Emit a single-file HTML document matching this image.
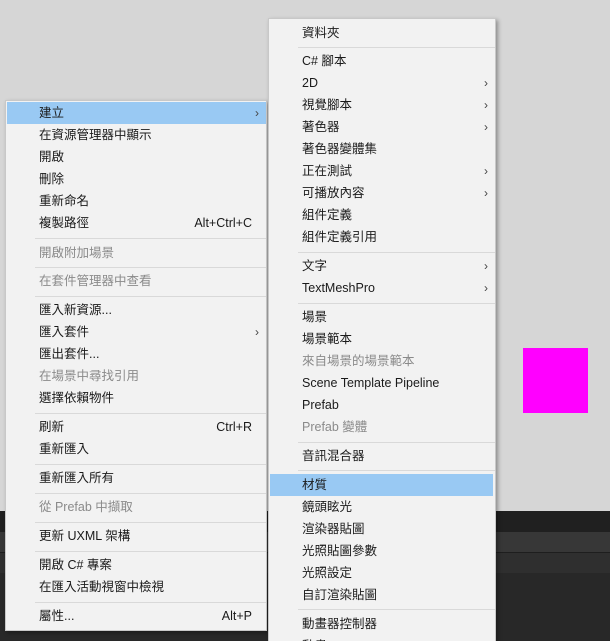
<!DOCTYPE html>
<html><head><meta charset="utf-8"><style>
*{margin:0;padding:0;box-sizing:border-box}
html{width:610px;height:641px;overflow:hidden}
body{width:610px;height:641px;overflow:hidden;position:relative;background:#d6d6d6;font-family:"Liberation Sans","Noto Sans CJK TC",sans-serif;font-size:12.5px;color:#1a1a1a}
.dark{position:absolute;left:0;width:610px}
.menu{position:absolute;background:#f2f2f2;border:1px solid #c8c8c8;box-shadow:2px 2px 4px rgba(0,0,0,.35);overflow:hidden}
.it{position:absolute;left:0;right:0;height:22px;line-height:22px;white-space:nowrap}
.hl{background:#99c9f3}
.dis{color:#8a8a8a}
.sc{position:absolute;right:14px;top:0}
.ar{position:absolute;right:7px;top:0;font-size:12px;color:#444}
.sep{position:absolute;right:0;height:1px;background:#d9d9d9}
.mag{position:absolute;left:523px;top:348px;width:65px;height:65px;background:#ff00ff}
</style></head><body>
<div class="dark" style="top:511px;height:21px;background:#202020"></div>
<div class="dark" style="top:532px;height:20px;background:#373737"></div>
<div class="dark" style="top:552px;height:1px;background:#1e1e1e"></div>
<div class="dark" style="top:553px;height:20px;background:#2f2f2f"></div>
<div class="dark" style="top:573px;height:68px;background:#282828"></div>
<div class="mag"></div>

<div class="menu" style="left:5px;top:100px;width:262px;height:531px">
<div class="it hl" style="top:1px;left:1px;right:0"><span style="padding-left:32px">建立</span><span class="ar">›</span></div>
<div class="it" style="top:23px;padding-left:33px">在資源管理器中顯示</div>
<div class="it" style="top:45px;padding-left:33px">開啟</div>
<div class="it" style="top:67px;padding-left:33px">刪除</div>
<div class="it" style="top:89px;padding-left:33px">重新命名</div>
<div class="it" style="top:111px;padding-left:33px">複製路徑<span class="sc">Alt+Ctrl+C</span></div>
<div class="sep" style="top:137px;left:29px"></div>
<div class="it dis" style="top:141px;padding-left:33px">開啟附加場景</div>
<div class="sep" style="top:166px;left:29px"></div>
<div class="it dis" style="top:169px;padding-left:33px">在套件管理器中查看</div>
<div class="sep" style="top:195px;left:29px"></div>
<div class="it" style="top:198px;padding-left:33px">匯入新資源...</div>
<div class="it" style="top:220px;padding-left:33px">匯入套件<span class="ar">›</span></div>
<div class="it" style="top:242px;padding-left:33px">匯出套件...</div>
<div class="it dis" style="top:264px;padding-left:33px">在場景中尋找引用</div>
<div class="it" style="top:286px;padding-left:33px">選擇依賴物件</div>
<div class="sep" style="top:312px;left:29px"></div>
<div class="it" style="top:315px;padding-left:33px">刷新<span class="sc">Ctrl+R</span></div>
<div class="it" style="top:337px;padding-left:33px">重新匯入</div>
<div class="sep" style="top:363px;left:29px"></div>
<div class="it" style="top:366px;padding-left:33px">重新匯入所有</div>
<div class="sep" style="top:392px;left:29px"></div>
<div class="it dis" style="top:395px;padding-left:33px">從 Prefab 中擷取</div>
<div class="sep" style="top:421px;left:29px"></div>
<div class="it" style="top:424px;padding-left:33px">更新 UXML 架構</div>
<div class="sep" style="top:450px;left:29px"></div>
<div class="it" style="top:453px;padding-left:33px">開啟 C# 專案</div>
<div class="it" style="top:475px;padding-left:33px">在匯入活動視窗中檢視</div>
<div class="sep" style="top:501px;left:29px"></div>
<div class="it" style="top:504px;padding-left:33px">屬性...<span class="sc">Alt+P</span></div>
</div>

<div class="menu" style="left:268px;top:18px;width:228px;height:623px;border-bottom:none">
<div class="it" style="top:3px;padding-left:33px">資料夾</div>
<div class="sep" style="top:28px;left:29px"></div>
<div class="it" style="top:31px;padding-left:33px">C# 腳本</div>
<div class="it" style="top:53px;padding-left:33px">2D<span class="ar">›</span></div>
<div class="it" style="top:75px;padding-left:33px">視覺腳本<span class="ar">›</span></div>
<div class="it" style="top:97px;padding-left:33px">著色器<span class="ar">›</span></div>
<div class="it" style="top:119px;padding-left:33px">著色器變體集</div>
<div class="it" style="top:141px;padding-left:33px">正在測試<span class="ar">›</span></div>
<div class="it" style="top:163px;padding-left:33px">可播放內容<span class="ar">›</span></div>
<div class="it" style="top:185px;padding-left:33px">組件定義</div>
<div class="it" style="top:207px;padding-left:33px">組件定義引用</div>
<div class="sep" style="top:233px;left:29px"></div>
<div class="it" style="top:236px;padding-left:33px">文字<span class="ar">›</span></div>
<div class="it" style="top:258px;padding-left:33px">TextMeshPro<span class="ar">›</span></div>
<div class="sep" style="top:284px;left:29px"></div>
<div class="it" style="top:287px;padding-left:33px">場景</div>
<div class="it" style="top:309px;padding-left:33px">場景範本</div>
<div class="it dis" style="top:331px;padding-left:33px">來自場景的場景範本</div>
<div class="it" style="top:353px;padding-left:33px">Scene Template Pipeline</div>
<div class="it" style="top:375px;padding-left:33px">Prefab</div>
<div class="it dis" style="top:397px;padding-left:33px">Prefab 變體</div>
<div class="sep" style="top:423px;left:29px"></div>
<div class="it" style="top:426px;padding-left:33px">音訊混合器</div>
<div class="sep" style="top:451px;left:29px"></div>
<div class="it hl" style="top:455px;left:1px;right:2px;padding-left:32px">材質</div>
<div class="it" style="top:477px;padding-left:33px">鏡頭眩光</div>
<div class="it" style="top:499px;padding-left:33px">渲染器貼圖</div>
<div class="it" style="top:521px;padding-left:33px">光照貼圖參數</div>
<div class="it" style="top:543px;padding-left:33px">光照設定</div>
<div class="it" style="top:565px;padding-left:33px">自訂渲染貼圖</div>
<div class="sep" style="top:590px;left:29px"></div>
<div class="it" style="top:594px;padding-left:33px">動畫器控制器</div>
<div class="it" style="top:616px;padding-left:33px">動畫</div>
</div>
</body></html>
